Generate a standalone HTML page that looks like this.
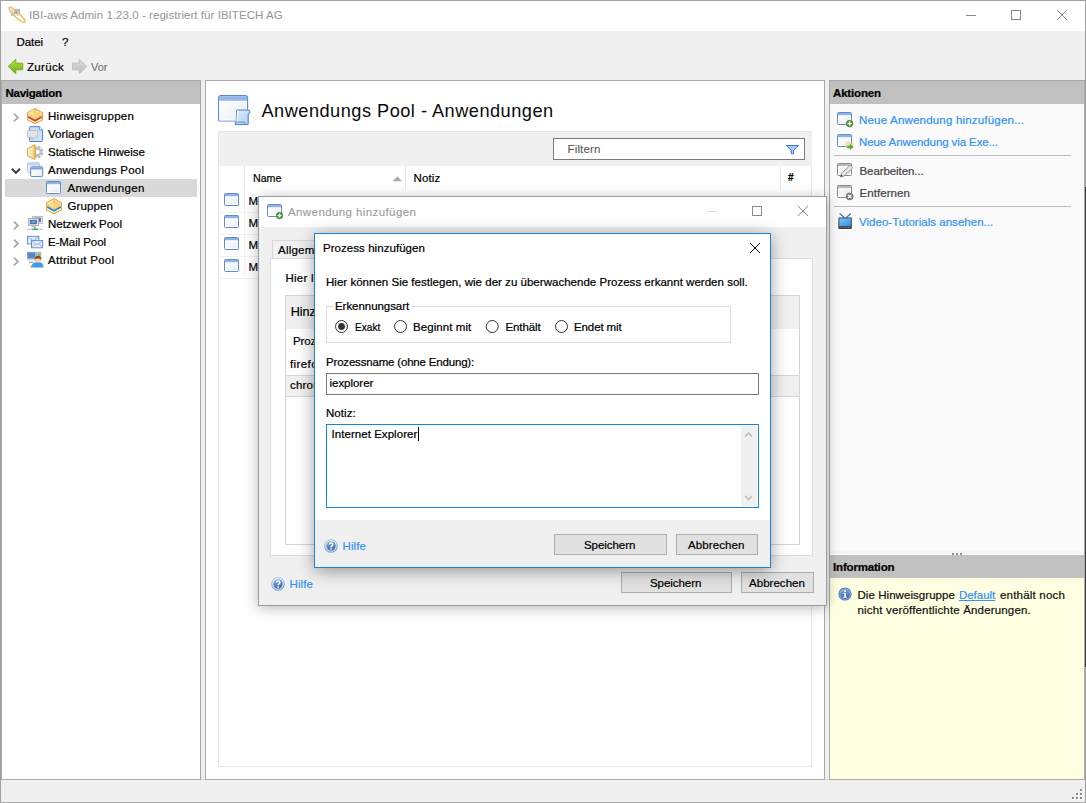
<!DOCTYPE html>
<html lang="de">
<head>
<meta charset="utf-8">
<title>IBI-aws Admin</title>
<style>
html,body{margin:0;padding:0;}
body{width:1086px;height:803px;overflow:hidden;background:#f0f0f0;font-family:"Liberation Sans",sans-serif;font-size:12px;position:relative;}
#app{position:absolute;left:0;top:0;width:1086px;height:803px;overflow:hidden;}
.a{position:absolute;box-sizing:border-box;}
.t{position:absolute;white-space:nowrap;line-height:1;-webkit-text-stroke:0.22px;}
svg{position:absolute;overflow:visible;}
.btn{position:absolute;box-sizing:border-box;background:#e1e1e1;border:1px solid #adadad;}
</style>
</head>
<body>
<div id="app">
<!-- window frame -->
<div class="a" style="left:1px;top:1px;width:1084px;height:30px;background:#fff;"></div>

<!-- navigation panel -->
<div class="a" style="left:1px;top:80px;width:200px;height:700px;background:#fff;border:1px solid #a9a9a9;"></div>
<div class="a" style="left:2px;top:81px;width:198px;height:23px;background:#c0c0c0;"></div>
<div class="a" style="left:5px;top:179px;width:192px;height:18px;background:#d9d9d9;"></div>

<!-- main panel -->
<div class="a" style="left:205px;top:80px;width:620px;height:700px;background:#fff;border:1px solid #a9a9a9;"></div>
<div class="a" style="left:218px;top:131px;width:594px;height:636px;border:1px solid #e4e4e4;"></div>
<div class="a" style="left:219px;top:132px;width:593px;height:34px;background:#f0f0f0;"></div>
<div class="a" style="left:553px;top:138px;width:252px;height:22px;background:#fff;border:1px solid #7a7a7a;"></div>
<!-- table grid -->
<div class="a" style="left:244px;top:166px;width:1px;height:24px;background:#e4e4e4;"></div><div class="a" style="left:244px;top:190px;width:1px;height:88px;background:#f0f0f0;"></div>
<div class="a" style="left:405px;top:166px;width:1px;height:24px;background:#e8e8e8;"></div>
<div class="a" style="left:780px;top:166px;width:1px;height:24px;background:#e8e8e8;"></div>
<div class="a" style="left:219px;top:212px;width:592px;height:1px;background:#f0f0f0;"></div>
<div class="a" style="left:219px;top:234px;width:592px;height:1px;background:#f0f0f0;"></div>
<div class="a" style="left:219px;top:256px;width:592px;height:1px;background:#f0f0f0;"></div>
<div class="a" style="left:219px;top:278px;width:592px;height:1px;background:#f0f0f0;"></div>

<!-- right panel -->
<div class="a" style="left:829px;top:80px;width:256px;height:700px;background:#f0f0f0;border:1px solid #a9a9a9;"></div>
<div class="a" style="left:830px;top:81px;width:254px;height:23px;background:#c0c0c0;"></div>
<div class="a" style="left:830px;top:104px;width:254px;height:447px;background:#fafafa;"></div>
<div class="a" style="left:834px;top:155px;width:237px;height:1px;background:#bcbcbc;"></div>
<div class="a" style="left:834px;top:206px;width:237px;height:1px;background:#bcbcbc;"></div>
<div class="a" style="left:830px;top:555px;width:254px;height:23px;background:#c0c0c0;"></div>
<div class="a" style="left:830px;top:578px;width:254px;height:201px;background:#ffffe1;"></div>
<!-- splitter dots -->
<div class="a" style="left:830px;top:551px;width:254px;height:4px;background:#f5f5f5;"></div>
<div class="a" style="left:830px;top:554px;width:254px;height:1px;background:#fdfdfd;"></div>
<div class="a" style="left:952px;top:553px;width:2px;height:2px;background:#8c8c8c;"></div>
<div class="a" style="left:956px;top:553px;width:2px;height:2px;background:#8c8c8c;"></div>
<div class="a" style="left:960px;top:553px;width:2px;height:2px;background:#8c8c8c;"></div>

<svg width="0" height="0" style="left:0;top:0">
<defs>
<linearGradient id="gWin" x1="0" y1="0" x2="1" y2="1"><stop offset="0" stop-color="#ffffff"/><stop offset="0.55" stop-color="#f4f6fb"/><stop offset="1" stop-color="#dfe6f4"/></linearGradient>
<linearGradient id="gWinG" x1="0" y1="0" x2="1" y2="1"><stop offset="0" stop-color="#ffffff"/><stop offset="1" stop-color="#e4e4e4"/></linearGradient>
<linearGradient id="gGreen" x1="0" y1="0" x2="0" y2="1"><stop offset="0" stop-color="#b5e24a"/><stop offset="1" stop-color="#6fae12"/></linearGradient>
<linearGradient id="gGray" x1="0" y1="0" x2="0" y2="1"><stop offset="0" stop-color="#dedede"/><stop offset="1" stop-color="#bdbdbd"/></linearGradient>
<linearGradient id="gGold" x1="0" y1="0" x2="1" y2="1"><stop offset="0" stop-color="#fffbe6"/><stop offset="0.55" stop-color="#f9d980"/><stop offset="1" stop-color="#f1b846"/></linearGradient>
<linearGradient id="gGoldL" x1="0" y1="0" x2="1" y2="0"><stop offset="0" stop-color="#fef6dc"/><stop offset="0.6" stop-color="#fae3a4"/><stop offset="1" stop-color="#f4c255"/></linearGradient>
<linearGradient id="gHelp" x1="0" y1="0" x2="0.3" y2="1"><stop offset="0" stop-color="#8db0de"/><stop offset="1" stop-color="#3d6cb0"/></linearGradient><linearGradient id="gHelpRing" x1="0" y1="0" x2="0.2" y2="1"><stop offset="0" stop-color="#dbe7f7"/><stop offset="1" stop-color="#6f99d3"/></linearGradient>
<linearGradient id="gTv" x1="0" y1="0" x2="1" y2="1"><stop offset="0" stop-color="#7cc4fa"/><stop offset="1" stop-color="#2f8fe6"/></linearGradient>
<linearGradient id="gScroll" x1="0" y1="0" x2="1" y2="1"><stop offset="0" stop-color="#e6f0fc"/><stop offset="1" stop-color="#a9caf2"/></linearGradient>
<!-- small window icon 15x13 -->
<g id="icoWin"><rect x="0.5" y="0.5" width="14" height="12" rx="0.9" fill="url(#gWin)" stroke="#5b84c8" stroke-width="0.95"/><rect x="1" y="1" width="13" height="2.6" fill="#8db2e8"/><rect x="1.6" y="3.8" width="11.8" height="7.6" fill="none" stroke="#fff" stroke-width="0.9"/></g>
<g id="icoWinGray"><rect x="0.5" y="0.5" width="14" height="12" rx="1" fill="url(#gWinG)" stroke="#8a8a8a"/><rect x="1" y="1" width="13" height="2.4" fill="#b9b9b9"/><rect x="1.6" y="3.8" width="11.8" height="7.6" fill="none" stroke="#fff" stroke-width="0.9"/></g>
<g id="icoPlus"><circle cx="0" cy="0" r="3.3" fill="#4c9a2e" stroke="#3b7d22" stroke-width="0.6"/><path d="M-2 0H2M0 -2V2" stroke="#fff" stroke-width="1.4"/></g>
<g id="icoHelp"><circle cx="7" cy="7" r="6.6" fill="url(#gHelpRing)" stroke="#8fb0de" stroke-width="0.5"/><circle cx="7" cy="7" r="5.5" fill="#fff"/><circle cx="7" cy="7" r="4.8" fill="url(#gHelp)"/><path d="M5.3 5.6 C5.3 3.6 8.8 3.6 8.8 5.5 C8.8 6.8 7.1 6.8 7.1 8.2" fill="none" stroke="#fff" stroke-width="1.5"/><rect x="6.3" y="9.2" width="1.6" height="1.5" fill="#fff"/></g>
<g id="chevR"><path d="M0.7 0.7 L4.6 4.5 L0.7 8.3" fill="none" stroke="#a9a9a9" stroke-width="1.8"/></g>
<!-- hex cube 16x16 ; layer color via currentColor -->
<g id="icoCube"><path d="M8 0.6 L15.4 4.8 V12 L8 15.6 L0.6 12 V4.8 Z" fill="#fffaf0" stroke="#e2a437" stroke-width="1.1"/><path d="M8 1.4 L14.6 5.2 L8 9 L1.4 5.2 Z" fill="url(#gGold)"/><path d="M1.2 5.4 L8 9.2 L14.8 5.4 V8.2 L8 12.2 L1.2 8.2 Z" fill="#f7cf6a"/><path d="M1.2 8 L8 11.8 L14.8 8 V10 L8 13.8 L1.2 10 Z" fill="currentColor"/><path d="M8 1.2 V5" stroke="#e0a030" stroke-width="0.8"/></g>
</defs>
</svg>

<!-- app icon -->
<svg style="left:8px;top:6px;" width="18" height="18" viewBox="8 6 18 18"><rect x="10.9" y="8.9" width="9.1" height="6.9" fill="#9dbbd6"/><ellipse cx="17" cy="14.9" rx="10.7" ry="2.5" transform="rotate(43 17 14.9)" fill="rgba(255,255,255,0.62)" stroke="#f1bf66" stroke-width="1.4"/><path d="M13.9 14.2 L15.5 10.6 L17.2 14.2 M14.5 13 H16.5" fill="none" stroke="#b9942f" stroke-width="0.9"/></svg>
<!-- window controls -->
<svg style="left:960px;top:5px;" width="120" height="22" viewBox="960 5 120 22"><path d="M966 15.5H976" stroke="#8a8a8a" stroke-width="1"/><rect x="1011.5" y="10.5" width="9" height="9" fill="none" stroke="#8a8a8a"/><path d="M1057 10 L1067 20 M1067 10 L1057 20" stroke="#8a8a8a" stroke-width="1"/></svg>
<!-- toolbar arrows -->
<svg style="left:7px;top:58px;" width="82" height="17" viewBox="7 58 82 17"><path d="M8.3 66.5 L15.8 59.2 V63.2 H22.7 V69.8 H15.8 V73.8 Z" fill="url(#gGreen)" stroke="#74a818" stroke-width="0.9" stroke-linejoin="round"/><path d="M86.7 66.5 L79.2 59.2 V63.2 H72.6 V69.8 H79.2 V73.8 Z" fill="url(#gGray)" stroke="#bcbcbc" stroke-width="0.9" stroke-linejoin="round"/></svg>

<!-- tree chevrons -->
<svg style="left:13px;top:113px;" width="6" height="9" viewBox="0 0 5.4 9"><use href="#chevR"/></svg>
<svg style="left:13px;top:221px;" width="6" height="9" viewBox="0 0 5.4 9"><use href="#chevR"/></svg>
<svg style="left:13px;top:239px;" width="6" height="9" viewBox="0 0 5.4 9"><use href="#chevR"/></svg>
<svg style="left:13px;top:257px;" width="6" height="9" viewBox="0 0 5.4 9"><use href="#chevR"/></svg>
<svg style="left:11px;top:168px;" width="10" height="6" viewBox="0 0 10 6"><path d="M0.8 0.8 L4.9 4.8 L9 0.8" fill="none" stroke="#3c3c3c" stroke-width="1.9"/></svg>

<!-- tree icons -->
<svg style="left:27px;top:108px;color:#d2402c" width="16" height="16" viewBox="0 0 16 16"><use href="#icoCube"/></svg>
<svg style="left:27px;top:126px;" width="17" height="16" viewBox="27 126 17 16"><path d="M30.2 126.7 H39.3 L42.6 130 V140.4 Q42.6 141.5 41.5 141.5 H30.2 Q29.6 141.5 29.6 140.9 V127.3 Q29.6 126.7 30.2 126.7 Z" fill="#cfe1f8" stroke="#4a82d4" stroke-width="1"/><path d="M39.3 126.7 V130 H42.6" fill="#e9f2fc" stroke="#4a82d4" stroke-width="0.8"/><path d="M28.6 130.5 H36.6 Q37.7 130.5 37.7 131.6 V136.3 Q37.7 137.4 36.6 137.4 H34.8 L32.3 140.2 V137.4 H28.6 Q27.5 137.4 27.5 136.3 V131.6 Q27.5 130.5 28.6 130.5 Z" fill="#e4e4e4" stroke="#b4b4b4" stroke-width="0.8"/></svg>
<svg style="left:27px;top:144px;" width="17" height="16" viewBox="27 144 17 16"><path d="M43.09 153.15 L42.21 155.28 L40.64 154.55 L39.85 155.34 L40.58 156.91 L38.45 157.79 L37.86 156.16 L36.74 156.16 L36.15 157.79 L34.02 156.91 L34.75 155.34 L33.96 154.55 L32.39 155.28 L31.51 153.15 L33.14 152.56 L33.14 151.44 L31.51 150.85 L32.39 148.72 L33.96 149.45 L34.75 148.66 L34.02 147.09 L36.15 146.21 L36.74 147.84 L37.86 147.84 L38.45 146.21 L40.58 147.09 L39.85 148.66 L40.64 149.45 L42.21 148.72 L43.09 150.85 L41.46 151.44 L41.46 152.56Z" fill="#c2c2c2" stroke="#a8a8a8" stroke-width="0.5"/><circle cx="37.6" cy="152" r="2.1" fill="#fff"/><path d="M35 144.6 L27.6 148.8 V156 L35 159.6 Z" fill="url(#gGoldL)" stroke="#e2a437" stroke-width="1"/></svg>
<svg style="left:27px;top:162px;" width="17" height="16" viewBox="27 162 17 16"><rect x="27.7" y="162.8" width="12" height="9.8" rx="1" fill="#f4f7fc" stroke="#a9c3e8"/><rect x="28.2" y="163.3" width="11" height="2" fill="#b9d0ee"/><rect x="30.7" y="166.8" width="12" height="9.8" rx="1" fill="url(#gWin)" stroke="#5584cc"/><rect x="31.2" y="167.3" width="11" height="2.2" fill="#7ba5e0"/></svg>
<svg style="left:46px;top:181px;" width="15" height="13" viewBox="0 0 15 13"><use href="#icoWin"/></svg>
<svg style="left:46px;top:198px;color:#1e90d2" width="16" height="16" viewBox="0 0 16 16"><use href="#icoCube"/></svg>
<!-- network -->
<svg style="left:27px;top:215px;" width="17" height="16" viewBox="27 215 17 16"><rect x="32.5" y="216.3" width="10" height="7" fill="#e6e6e6" stroke="#b0b0b0" stroke-width="0.8"/><rect x="34" y="217.6" width="7" height="4.4" fill="#4c7cc6"/><rect x="28.4" y="218.5" width="10" height="7" fill="#ececec" stroke="#a8a8a8" stroke-width="0.8"/><rect x="29.8" y="219.8" width="7.2" height="4.4" fill="#4775bf"/><rect x="31.2" y="221.2" width="4.4" height="1.4" fill="#86a9e0"/><path d="M31.5 226.4 H35.3" stroke="#b0b0b0" stroke-width="1"/><path d="M27.3 229.3 H43" stroke="#c4cbd0" stroke-width="1.3"/><path d="M32 229.3 H38 M35 226.8 V229" stroke="#3fb070" stroke-width="1.3"/></svg>
<!-- email -->
<svg style="left:27px;top:235px;" width="17" height="14" viewBox="27 235 17 14"><rect x="27.5" y="236.3" width="11.4" height="7.6" fill="#e3edfa" stroke="#5b8ad2" stroke-width="0.9"/><path d="M28 236.8 L33.2 241 L38.4 236.8" fill="none" stroke="#7ea4de" stroke-width="0.8"/><rect x="31.5" y="240.4" width="11.2" height="7.4" fill="#e3edfa" stroke="#5b8ad2" stroke-width="0.9"/><path d="M32 240.9 L37.1 245 L42.2 240.9 M32 247.3 L35.6 243.9 M42.2 247.3 L38.6 243.9" fill="none" stroke="#7ea4de" stroke-width="0.8"/></svg>
<!-- attribut -->
<svg style="left:27px;top:251px;" width="17" height="17" viewBox="27 251 17 17"><rect x="36.6" y="252.3" width="4.2" height="9" fill="#d4d4d4" stroke="#9c9c9c" stroke-width="0.7"/><rect x="38" y="253.6" width="1.6" height="2" fill="#3cae4a"/><rect x="27.3" y="252.2" width="8" height="6.6" fill="#5a86cc" stroke="#7d9fd8" stroke-width="0.6"/><rect x="27.3" y="258.8" width="8" height="1.6" fill="#d8d8d8"/><path d="M29 262.4 H33.5" stroke="#a8a8a8" stroke-width="1.4"/><circle cx="38" cy="260.6" r="3" fill="#f6d3b4"/><path d="M34.6 260 Q34.8 255.8 38 255.8 Q41.4 255.8 41.4 260 Q39.8 258.4 38 258.6 Q36 258.4 34.6 260Z" fill="#8a4a1c"/><path d="M31.2 267.6 Q32 262.6 35.4 262.6 H40.4 Q43.2 262.8 43.6 267.6 Z" fill="#3f9bf0"/><rect x="30.6" y="265.4" width="1.6" height="2.2" fill="#e8923a"/></svg>

<!-- main header icon -->
<svg style="left:218px;top:94px;" width="33" height="32" viewBox="218 94 33 32"><path d="M218.6 120.4 V98 Q218.6 95.6 221 95.6 H245.2 Q247.6 95.6 247.6 98 V120.4 Q247.6 121 247 121 H219.2 Q218.6 121 218.6 120.4Z" fill="url(#gWin)" stroke="#5b88cc" stroke-width="1.1"/><path d="M219.2 98 Q219.2 96.2 221 96.2 H245.2 Q247 96.2 247 98 V100.8 H219.2Z" fill="#93b7e9"/><rect x="220" y="101.6" width="26.4" height="18.4" fill="none" stroke="#fff" stroke-width="0.9"/><path d="M236.8 110 H247.6 Q250 110 250 112 Q250 113.6 248.2 113.6 V124.6 H235 Q235 122.4 236.2 122 Z" fill="url(#gScroll)" stroke="#4b84c8" stroke-width="1"/><path d="M235.6 122.2 H244.6 Q245.6 123.4 244.8 124.4" fill="none" stroke="#4b84c8" stroke-width="0.9"/><path d="M237.6 111 L237 121.2" stroke="#fff" stroke-width="1.1"/></svg>
<!-- filter funnel -->
<svg style="left:786px;top:144px;" width="13" height="11" viewBox="786 144 13 11"><path d="M786.4 145.5 H798.6 L793.6 150.4 V153.8 H791.4 V150.4 Z" fill="#a9c9f2" stroke="#3a79d2" stroke-width="1" stroke-linejoin="round"/></svg>
<!-- sort arrow -->
<svg style="left:392px;top:176px;" width="11" height="6" viewBox="0 0 11 6"><path d="M0.6 5.2 L5.4 0.4 L10.2 5.2Z" fill="#a8a8a8"/></svg>
<!-- table row icons -->
<svg style="left:224px;top:193px;" width="15" height="13" viewBox="0 0 15 13"><use href="#icoWin"/></svg>
<svg style="left:224px;top:215px;" width="15" height="13" viewBox="0 0 15 13"><use href="#icoWin"/></svg>
<svg style="left:224px;top:237px;" width="15" height="13" viewBox="0 0 15 13"><use href="#icoWin"/></svg>
<svg style="left:224px;top:259px;" width="15" height="13" viewBox="0 0 15 13"><use href="#icoWin"/></svg>

<!-- action icons -->
<svg style="left:837px;top:112px;" width="17" height="16" viewBox="0 0 17 16"><use href="#icoWin"/><use href="#icoPlus" x="12.6" y="11.6"/></svg>
<svg style="left:837px;top:134px;" width="17" height="16" viewBox="0 0 17 16"><use href="#icoWin"/><path d="M9.4 8.6 H12.6 L13.4 9.6 H16 V13.6 H9.4Z" fill="#f8e7a8" stroke="#e9c766" stroke-width="0.6"/><path d="M10.6 12 H13.2 V10.2 L16.2 12.9 L13.2 15.6 V13.8 H10.6Z" fill="#58aa3c" stroke="#3f8c2a" stroke-width="0.5"/></svg>
<svg style="left:837px;top:163px;" width="17" height="16" viewBox="0 0 17 16"><use href="#icoWinGray"/><path d="M3.4 14 L4.6 10.2 L12.4 3 Q13.6 2.2 14.8 3.4 Q15.8 4.6 15 5.8 L7.2 12.9 Z" fill="#eeeeee" stroke="#8c8c8c" stroke-width="0.9" stroke-linejoin="round"/><path d="M5 10.6 L12.8 3.6 M6.6 12.2 L14.4 5.2" stroke="#c4c4c4" stroke-width="0.6"/><path d="M3.4 14 L4.3 11.3 L6 13Z" fill="#4a4a4a"/></svg>
<svg style="left:837px;top:185px;" width="17" height="16" viewBox="0 0 17 16"><use href="#icoWinGray"/><circle cx="12.7" cy="11.4" r="3.5" fill="#808080" stroke="#666" stroke-width="0.6"/><path d="M11.1 9.8 L14.3 13 M14.3 9.8 L11.1 13" stroke="#fff" stroke-width="1.2"/></svg>
<svg style="left:838px;top:213px;" width="15" height="17" viewBox="838 213 15 17"><path d="M839.6 213.6 L844.6 218 M850.8 213.6 L846 218" stroke="#4a78b8" stroke-width="1.3"/><rect x="838.4" y="217.6" width="13.4" height="11.4" rx="1" fill="#3a3a3a"/><rect x="839.3" y="218.4" width="11.6" height="7.8" fill="url(#gTv)"/><rect x="839.6" y="227" width="2" height="1" fill="#e03030"/><path d="M842.6 227.5 H850.6" stroke="#8a8a8a" stroke-width="0.9" stroke-dasharray="1 0.8"/></svg>
<!-- info icon -->
<svg style="left:838px;top:587px;" width="14" height="14" viewBox="0 0 14 14"><circle cx="7" cy="7" r="6.6" fill="#4f7cc6"/><circle cx="7" cy="7" r="5.5" fill="#a9c2e8"/><circle cx="7" cy="7" r="4.9" fill="url(#gHelp)"/><rect x="6.2" y="3.2" width="1.7" height="1.7" fill="#fff"/><path d="M5.6 6 H7.9 V9.8 H8.8 V10.8 H5.4 V9.8 H6.3 V7 H5.6Z" fill="#fff"/></svg>
<!-- status grip -->
<svg style="left:1071px;top:788px;" width="12" height="12" viewBox="1071 788 12 12"><g fill="#fff"><rect x="1081" y="790" width="2" height="2"/><rect x="1077" y="794" width="2" height="2"/><rect x="1081" y="794" width="2" height="2"/><rect x="1073" y="798" width="2" height="2"/><rect x="1077" y="798" width="2" height="2"/><rect x="1081" y="798" width="2" height="2"/></g><g fill="#8c8c8c"><rect x="1080" y="789" width="2" height="2"/><rect x="1076" y="793" width="2" height="2"/><rect x="1080" y="793" width="2" height="2"/><rect x="1072" y="797" width="2" height="2"/><rect x="1076" y="797" width="2" height="2"/><rect x="1080" y="797" width="2" height="2"/></g></svg>

<span class="t" style="left:29.00px;top:10.42px;font-size:11.5px;color:#999;letter-spacing:0.052px;-webkit-text-stroke:0.08px;">IBI-aws Admin 1.23.0 - registriert für IBITECH AG</span>
<span class="t" style="left:16.50px;top:37.42px;font-size:11.5px;color:#000;letter-spacing:-0.073px;">Datei</span>
<span class="t" style="left:62.00px;top:37.42px;font-size:11.5px;color:#000;">?</span>
<span class="t" style="left:27.00px;top:62.02px;font-size:11.5px;color:#000;letter-spacing:0.321px;">Zurück</span>
<span class="t" style="left:91.00px;top:62.02px;font-size:11.5px;color:#6d6d6d;-webkit-text-stroke:0.08px;transform:scaleX(0.9466);transform-origin:0 0;">Vor</span>
<span class="t" style="left:5.50px;top:88.02px;font-size:11.5px;color:#000;font-weight:bold;letter-spacing:-0.251px;">Navigation</span>
<span class="t" style="left:48.00px;top:111.02px;font-size:11.5px;color:#000;letter-spacing:0.264px;">Hinweisgruppen</span>
<span class="t" style="left:48.00px;top:129.02px;font-size:11.5px;color:#000;letter-spacing:0.071px;">Vorlagen</span>
<span class="t" style="left:48.00px;top:147.02px;font-size:11.5px;color:#000;letter-spacing:-0.015px;">Statische Hinweise</span>
<span class="t" style="left:48.00px;top:165.02px;font-size:11.5px;color:#000;letter-spacing:0.239px;">Anwendungs Pool</span>
<span class="t" style="left:67.50px;top:183.02px;font-size:11.5px;color:#000;letter-spacing:0.336px;">Anwendungen</span>
<span class="t" style="left:67.50px;top:201.02px;font-size:11.5px;color:#000;letter-spacing:0.107px;">Gruppen</span>
<span class="t" style="left:48.00px;top:219.02px;font-size:11.5px;color:#000;letter-spacing:-0.007px;">Netzwerk Pool</span>
<span class="t" style="left:48.00px;top:237.02px;font-size:11.5px;color:#000;letter-spacing:-0.074px;">E-Mail Pool</span>
<span class="t" style="left:48.00px;top:255.02px;font-size:11.5px;color:#000;letter-spacing:0.284px;">Attribut Pool</span>
<span class="t" style="left:261.50px;top:102.34px;font-size:18.2px;color:#0a0a0a;letter-spacing:0.483px;-webkit-text-stroke:0;">Anwendungs Pool - Anwendungen</span>
<span class="t" style="left:567.50px;top:144.02px;font-size:11.5px;color:#555;letter-spacing:0.158px;-webkit-text-stroke:0.08px;">Filtern</span>
<span class="t" style="left:252.50px;top:173.02px;font-size:11.5px;color:#000;transform:scaleX(0.9247);transform-origin:0 0;">Name</span>
<span class="t" style="left:413.50px;top:173.02px;font-size:11.5px;color:#000;letter-spacing:0.137px;">Notiz</span>
<span class="t" style="left:788.00px;top:173.28px;font-size:10px;color:#000;font-weight:bold;">#</span>
<span class="t" style="left:248.50px;top:196.02px;font-size:11.5px;color:#000;">M</span>
<span class="t" style="left:248.50px;top:218.02px;font-size:11.5px;color:#000;">M</span>
<span class="t" style="left:248.50px;top:240.02px;font-size:11.5px;color:#000;">M</span>
<span class="t" style="left:248.50px;top:262.02px;font-size:11.5px;color:#000;">M</span>
<span class="t" style="left:833.00px;top:88.02px;font-size:11.5px;color:#000;font-weight:bold;letter-spacing:-0.167px;">Aktionen</span>
<span class="t" style="left:859.00px;top:115.02px;font-size:11.5px;color:#3592f5;letter-spacing:0.193px;">Neue Anwendung hinzufügen...</span>
<span class="t" style="left:859.00px;top:137.02px;font-size:11.5px;color:#3592f5;letter-spacing:-0.093px;">Neue Anwendung via Exe...</span>
<span class="t" style="left:859.50px;top:166.02px;font-size:11.5px;color:#444;letter-spacing:-0.085px;">Bearbeiten...</span>
<span class="t" style="left:859.50px;top:188.02px;font-size:11.5px;color:#444;letter-spacing:0.066px;">Entfernen</span>
<span class="t" style="left:859.00px;top:217.02px;font-size:11.5px;color:#3592f5;letter-spacing:0.023px;">Video-Tutorials ansehen...</span>
<span class="t" style="left:833.00px;top:562.02px;font-size:11.5px;color:#000;font-weight:bold;letter-spacing:-0.172px;">Information</span>
<span class="t" style="left:857.50px;top:590.02px;font-size:11.5px;color:#111;letter-spacing:0.055px;">Die Hinweisgruppe</span>
<span class="t" style="left:959.00px;top:590.02px;font-size:11.5px;color:#3592f5;letter-spacing:-0.040px;text-decoration:underline;">Default</span>
<span class="t" style="left:1000.00px;top:590.02px;font-size:11.5px;color:#111;letter-spacing:0.203px;">enthält noch</span>
<span class="t" style="left:857.50px;top:605.02px;font-size:11.5px;color:#111;letter-spacing:0.165px;">nicht veröffentlichte Änderungen.</span>

<!-- outer window border -->
<div class="a" style="left:201px;top:779px;width:4px;height:1px;background:#d6d6d6;"></div><div class="a" style="left:825px;top:779px;width:4px;height:1px;background:#d6d6d6;"></div>
<div class="a" style="left:0;top:0;width:1086px;height:803px;border:1px solid #a0a0a0;border-bottom-color:#acacac;"></div>
<div class="a" style="left:1085px;top:187px;width:1px;height:480px;background:#3a3a3a;"></div>
</div>

<!-- dialog 1 -->
<div class="a" id="d1" style="left:258px;top:196px;width:569px;height:410px;background:#f0f0f0;border:1px solid #9c9c9c;box-shadow:0 2px 13px rgba(0,0,0,0.28);"></div>
<div class="a" style="left:259px;top:197px;width:567px;height:30px;background:#fff;"></div>
<div class="a" style="left:270px;top:258px;width:543px;height:298px;background:#fff;border:1px solid #dcdcdc;"></div>
<div class="a" style="left:272px;top:240px;width:70px;height:18px;background:#f1f1f1;border:1px solid #d9d9d9;border-bottom:none;"></div>
<div class="a" style="left:285px;top:295px;width:515px;height:250px;background:#fff;border:1px solid #d5d5d5;"></div>
<div class="a" style="left:286px;top:296px;width:513px;height:33px;background:#f0f0f0;"></div>
<div class="a" style="left:286px;top:375px;width:513px;height:1px;background:#d5d5d5;"></div>
<div class="a" style="left:286px;top:376px;width:513px;height:20px;background:#f0f0f0;"></div>
<div class="a" style="left:286px;top:396px;width:513px;height:1px;background:#d5d5d5;"></div>
<div class="btn" style="left:621px;top:572px;width:111px;height:21px;"></div>
<div class="btn" style="left:741px;top:572px;width:73px;height:21px;"></div>
<svg style="left:267px;top:204px;" width="17" height="16" viewBox="0 0 17 16"><use href="#icoWin"/><use href="#icoPlus" x="12.6" y="11.6"/></svg>
<svg style="left:700px;top:204px;" width="112" height="14" viewBox="700 204 112 14"><path d="M707 211.5H717" stroke="#dcdcdc" stroke-width="1"/><rect x="752.5" y="206.5" width="9" height="9" fill="none" stroke="#8a8a8a"/><path d="M798 206 L808 216 M808 206 L798 216" stroke="#8a8a8a" stroke-width="1"/></svg>
<svg style="left:271px;top:577px;" width="14" height="14" viewBox="0 0 14 14"><use href="#icoHelp"/></svg>

<span class="t" style="left:288.00px;top:207.02px;font-size:11.5px;color:#999;letter-spacing:0.404px;-webkit-text-stroke:0.08px;">Anwendung hinzufügen</span>
<span class="t" style="left:278.00px;top:245.02px;font-size:11.5px;color:#000;letter-spacing:0.237px;">Allgemein</span>
<span class="t" style="left:285.50px;top:273.02px;font-size:11.5px;color:#000;letter-spacing:0.235px;">Hier legen Sie fest, welche Prozesse zu dieser Anwendung gehören.</span>
<span class="t" style="left:290.70px;top:305.78px;font-size:12.6px;color:#000;letter-spacing:-0.045px;">Hinzufügen</span>
<span class="t" style="left:293.00px;top:335.52px;font-size:11.5px;color:#000;letter-spacing:-0.091px;">Prozessname</span>
<span class="t" style="left:290.00px;top:358.52px;font-size:11.5px;color:#000;letter-spacing:0.406px;">firefox</span>
<span class="t" style="left:290.00px;top:380.02px;font-size:11.5px;color:#000;letter-spacing:0.210px;">chrome</span>
<span class="t" style="left:289.50px;top:578.52px;font-size:11.5px;color:#3592f5;letter-spacing:0.098px;">Hilfe</span>
<span class="t" style="left:650.00px;top:578.02px;font-size:11.5px;color:#000;letter-spacing:-0.048px;">Speichern</span>
<span class="t" style="left:749.00px;top:578.02px;font-size:11.5px;color:#000;letter-spacing:0.034px;">Abbrechen</span>

<!-- dialog 2 -->
<div class="a" id="d2" style="left:314px;top:233px;width:457px;height:335px;background:#fff;border:1px solid #1883d7;box-shadow:0 3px 16px rgba(0,0,0,0.38);"></div>
<div class="a" style="left:315px;top:520px;width:455px;height:47px;background:#f0f0f0;"></div>
<div class="a" style="left:326px;top:306px;width:405px;height:37px;border:1px solid #dcdcdc;"></div>
<div class="a" style="left:333px;top:300px;width:79px;height:14px;background:#fff;"></div>
<div class="a" style="left:326px;top:373px;width:433px;height:22px;background:#fff;border:1px solid #7a7a7a;"></div>
<div class="a" style="left:326px;top:424px;width:433px;height:84px;background:#fff;border:1px solid #1883d7;"></div>
<div class="a" style="left:741px;top:426px;width:16px;height:80px;background:#f0f0f0;"></div>
<div class="a" style="left:418px;top:427px;width:1px;height:14px;background:#000;"></div>
<div class="btn" style="left:554px;top:534px;width:113px;height:21px;"></div>
<div class="btn" style="left:676px;top:534px;width:82px;height:21px;"></div>
<svg style="left:749px;top:242px;" width="12" height="12" viewBox="749 242 12 12"><path d="M750 243 L760 253 M760 243 L750 253" stroke="#000" stroke-width="1"/></svg>
<svg style="left:334px;top:319px;" width="236" height="15" viewBox="334 319 236 15"><g fill="#fff" stroke="#333" stroke-width="1"><circle cx="341.5" cy="326.5" r="6"/><circle cx="400.5" cy="326.5" r="6"/><circle cx="492.2" cy="326.5" r="6"/><circle cx="561.5" cy="326.5" r="6"/></g><circle cx="341.5" cy="326.5" r="3.4" fill="#333"/></svg>
<svg style="left:741px;top:425px;" width="17" height="82" viewBox="741 425 17 82"><path d="M745.2 436.6 L748.6 433 L752 436.6" fill="none" stroke="#bdbdbd" stroke-width="1.7"/><path d="M745.2 496 L748.6 499.6 L752 496" fill="none" stroke="#bdbdbd" stroke-width="1.7"/></svg>
<svg style="left:324px;top:539px;" width="14" height="14" viewBox="0 0 14 14"><use href="#icoHelp"/></svg>

<span class="t" style="left:323.00px;top:243.02px;font-size:11.5px;color:#000;letter-spacing:0.052px;">Prozess hinzufügen</span>
<span class="t" style="left:326.00px;top:276.52px;font-size:11.5px;color:#000;letter-spacing:0.022px;">Hier können Sie festlegen, wie der zu überwachende Prozess erkannt werden soll.</span>
<span class="t" style="left:335.00px;top:301.02px;font-size:11.5px;color:#000;letter-spacing:-0.050px;">Erkennungsart</span>
<span class="t" style="left:354.50px;top:321.52px;font-size:11.5px;color:#000;transform:scaleX(0.8794);transform-origin:0 0;">Exakt</span>
<span class="t" style="left:413.00px;top:321.52px;font-size:11.5px;color:#000;letter-spacing:0.067px;">Beginnt mit</span>
<span class="t" style="left:505.50px;top:321.52px;font-size:11.5px;color:#000;letter-spacing:-0.101px;">Enthält</span>
<span class="t" style="left:574.00px;top:321.52px;font-size:11.5px;color:#000;letter-spacing:-0.110px;">Endet mit</span>
<span class="t" style="left:326.00px;top:357.02px;font-size:11.5px;color:#000;letter-spacing:-0.184px;">Prozessname (ohne Endung):</span>
<span class="t" style="left:329.50px;top:378.02px;font-size:11.5px;color:#000;letter-spacing:-0.034px;">iexplorer</span>
<span class="t" style="left:326.00px;top:408.02px;font-size:11.5px;color:#000;letter-spacing:0.060px;">Notiz:</span>
<span class="t" style="left:331.50px;top:429.02px;font-size:11.5px;color:#000;letter-spacing:0.051px;">Internet Explorer</span>
<span class="t" style="left:342.50px;top:541.02px;font-size:11.5px;color:#3592f5;letter-spacing:0.098px;">Hilfe</span>
<span class="t" style="left:584.00px;top:540.02px;font-size:11.5px;color:#000;letter-spacing:-0.048px;">Speichern</span>
<span class="t" style="left:688.00px;top:540.02px;font-size:11.5px;color:#000;letter-spacing:0.096px;">Abbrechen</span>
</body>
</html>
